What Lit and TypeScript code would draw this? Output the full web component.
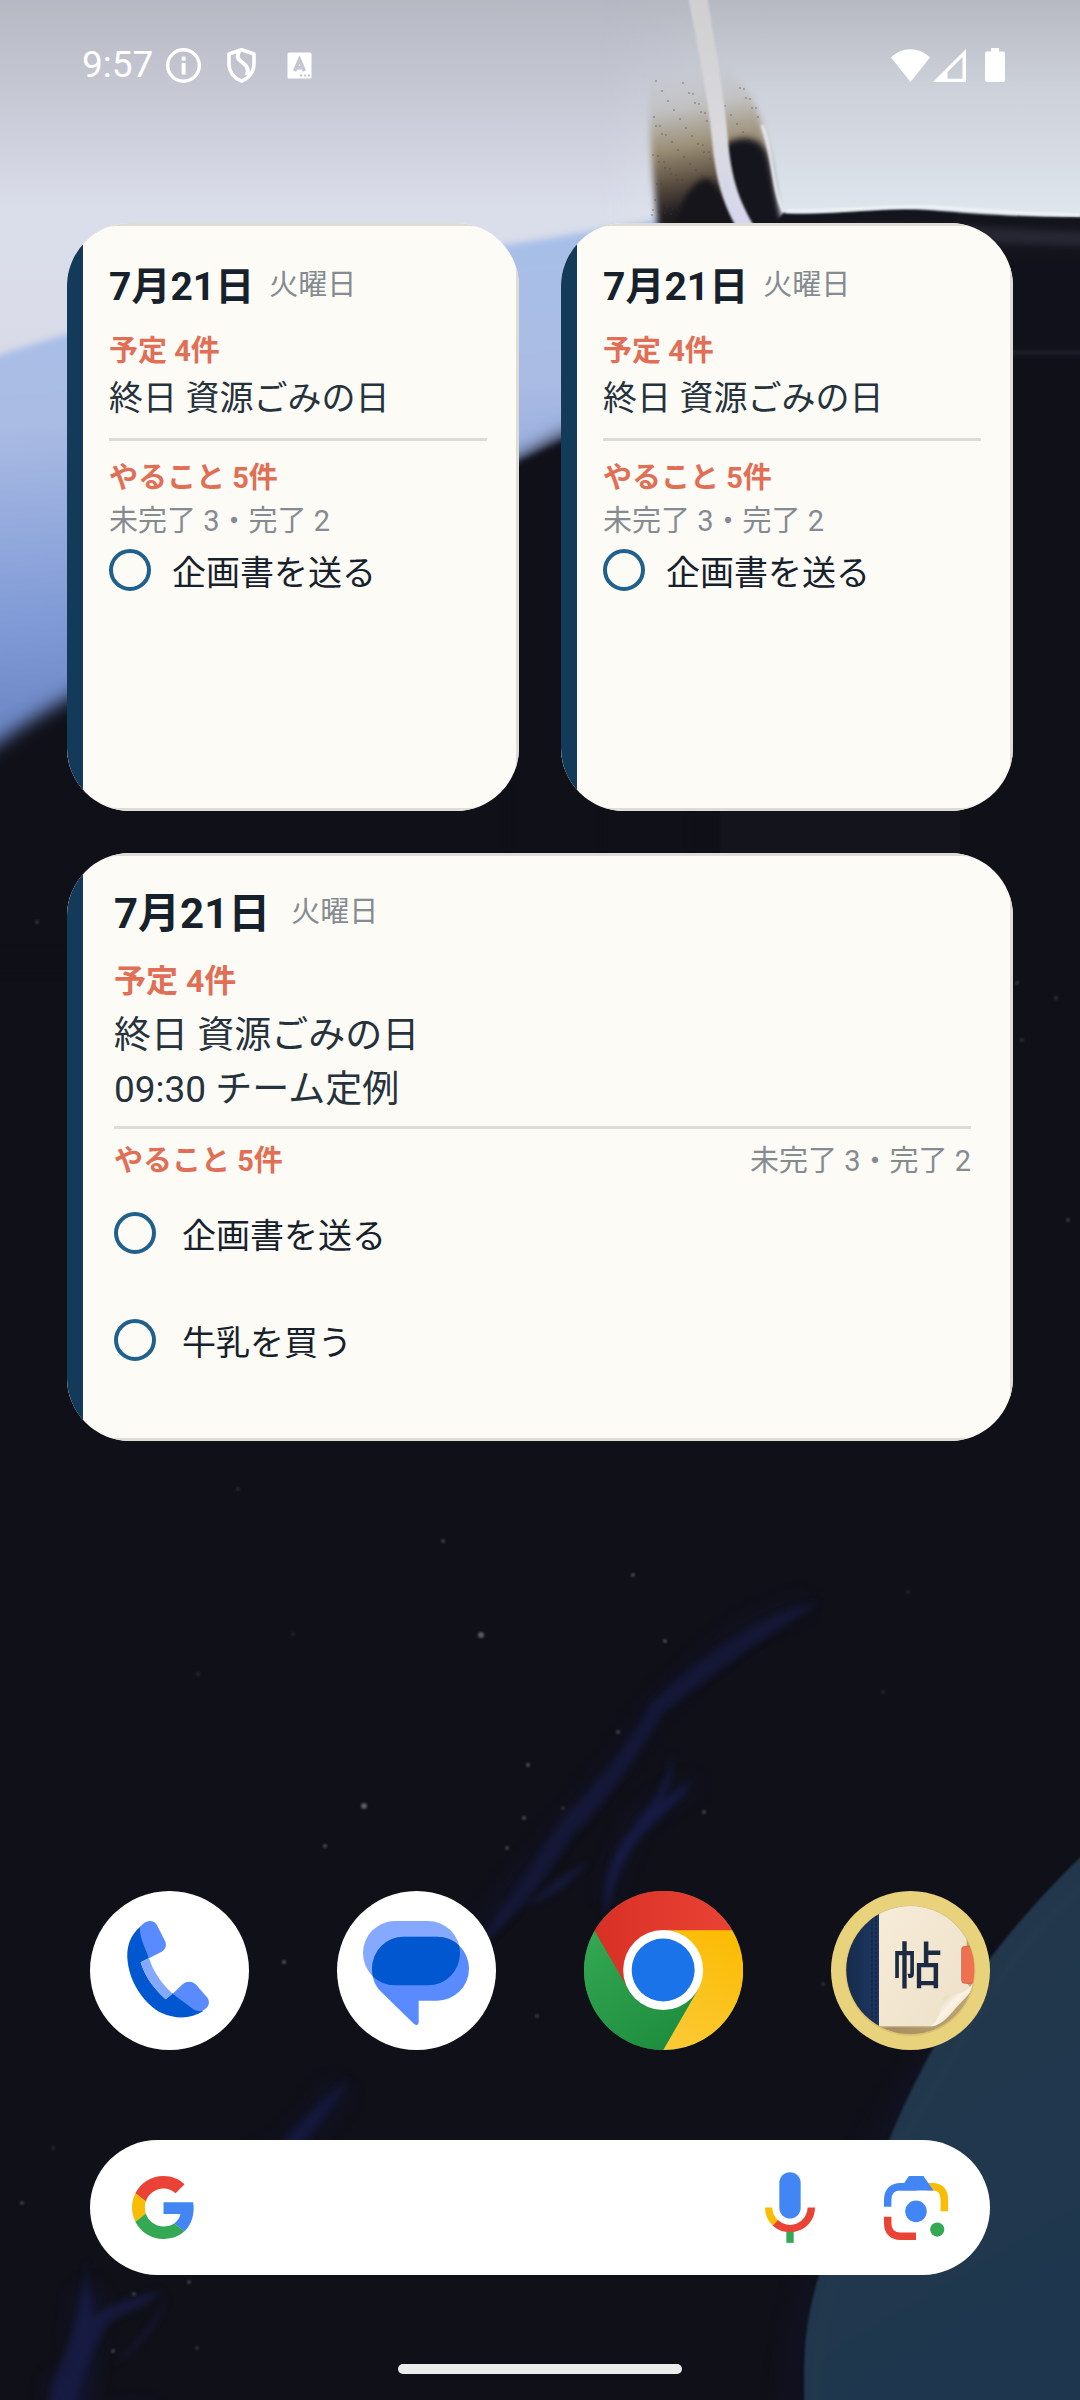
import { LitElement, html, svg, css } from "lit";
import { customElement, property } from "lit/decorators.js";

interface Agenda {
  date: string;
  weekday: string;
  eventsTitle: string;
  events: string[];
  todoTitle: string;
  summary: string;
  todos: string[];
}

const base = {
  date: "7月21日",
  weekday: "火曜日",
  eventsTitle: "予定 4件",
  todoTitle: "やること 5件",
  summary: "未完了 3・完了 2",
};

const compactAgenda: Agenda = {
  ...base,
  events: ["終日 資源ごみの日"],
  todos: ["企画書を送る"],
};

const wideAgenda: Agenda = {
  ...base,
  events: ["終日 資源ごみの日", "09:30 チーム定例"],
  todos: ["企画書を送る", "牛乳を買う"],
};

/* x, y, radius, opacity */
const stars: number[][] = [
  [481, 1635, 3, 0.45], [364, 1806, 3, 0.45], [443, 1541, 2, 0.3], [633, 1575, 2, 0.35],
  [665, 1641, 2, 0.35], [528, 1765, 2, 0.4], [524, 1818, 2, 0.35], [618, 1732, 2, 0.3],
  [704, 1812, 2, 0.3], [325, 1846, 2, 0.35], [284, 1962, 2, 0.4], [537, 2016, 2, 0.25],
  [238, 1489, 2, 0.15], [198, 1674, 2, 0.15], [563, 1808, 2, 0.2], [507, 1848, 2, 0.3],
  [823, 1984, 2, 0.2], [22, 2203, 2, 0.3], [134, 2294, 2, 0.25], [113, 2351, 2, 0.3],
  [189, 2282, 2, 0.3], [197, 2348, 2, 0.2], [908, 1592, 2, 0.12], [883, 1692, 2, 0.12],
  [1022, 1040, 2, 0.2], [1017, 983, 2, 0.2], [1056, 998, 2, 0.2], [1068, 1220, 2, 0.25],
  [37, 922, 2, 0.2], [293, 1634, 2, 0.12], [53, 2148, 2, 0.15], [165, 2154, 2, 0.15],
];

/* Grains scattered over the brown edge, denser towards its lower part. */
const grains: number[][] = Array.from({ length: 150 }, (_, i) => {
  const u = (i * 0.618034) % 1;
  const v = (i * 0.754878) % 1;
  return [652 + Math.round(u * 108), 215 - Math.round(v * v * 135), 1];
});

@customElement("wall-paper")
class WallPaper extends LitElement {
  static styles = css`
    :host { display: block; }
    .art { display: block; width: 100%; height: 100%; }
    filter { color-interpolation-filters: sRGB; }
  `;

  render() {
    return html`
      <svg class="art" viewBox="0 0 1080 2400" preserveAspectRatio="xMidYMid slice" aria-hidden="true">
        <defs>
          <linearGradient id="sky" x1="0" y1="0" x2="0" y2="1">
            <stop offset="0" stop-color="#b6b8c2"></stop>
            <stop offset="0.25" stop-color="#c8cad6"></stop>
            <stop offset="0.5" stop-color="#dadeea"></stop>
            <stop offset="1" stop-color="#d9d9e8"></stop>
          </linearGradient>
          <linearGradient id="haze" x1="0" y1="0" x2="0" y2="1">
            <stop offset="0" stop-color="#b6b9c1"></stop>
            <stop offset="0.4" stop-color="#cdd1da"></stop>
            <stop offset="1" stop-color="#e0e7ed"></stop>
          </linearGradient>
          <linearGradient id="hazeEdge" x1="0" y1="0" x2="1" y2="0">
            <stop offset="0" stop-color="#fff" stop-opacity="0"></stop>
            <stop offset="1" stop-color="#fff"></stop>
          </linearGradient>
          <mask id="hazeMask"><rect x="600" width="480" height="222" fill="#fff"></rect><rect x="600" width="120" height="222" fill="#000"></rect><rect x="600" width="120" height="222" fill="url(#hazeEdge)"></rect></mask>
          <linearGradient id="band" x1="0.1" y1="0" x2="0.2" y2="1">
            <stop offset="0" stop-color="#a5c1ea"></stop>
            <stop offset="0.35" stop-color="#abbce4"></stop>
            <stop offset="0.7" stop-color="#7f9ad6"></stop>
            <stop offset="1" stop-color="#5f7ab9"></stop>
          </linearGradient>
          <linearGradient id="blob" gradientUnits="userSpaceOnUse" x1="692" y1="60" x2="718" y2="225">
            <stop offset="0" stop-color="#c4c5ca" stop-opacity="0"></stop>
            <stop offset="0.28" stop-color="#c0c0c0"></stop>
            <stop offset="0.5" stop-color="#9c9078"></stop>
            <stop offset="0.72" stop-color="#584c3f"></stop>
            <stop offset="0.9" stop-color="#1d1b20"></stop>
          </linearGradient>
          <linearGradient id="strand" x1="0" y1="0" x2="0" y2="1">
            <stop offset="0" stop-color="#cfcfd1"></stop>
            <stop offset="0.55" stop-color="#dadade"></stop>
            <stop offset="1" stop-color="#d5d7ee"></stop>
          </linearGradient>
          <linearGradient id="planet" x1="0" y1="0" x2="0.3" y2="1">
            <stop offset="0" stop-color="#24384b"></stop>
            <stop offset="1" stop-color="#1f374e"></stop>
          </linearGradient>
          <filter id="soft1" x="-20%" y="-20%" width="140%" height="140%"><feGaussianBlur stdDeviation="1"></feGaussianBlur></filter>
          <filter id="soft3" x="-20%" y="-20%" width="140%" height="140%"><feGaussianBlur stdDeviation="3"></feGaussianBlur></filter>
          <filter id="soft9" x="-20%" y="-20%" width="140%" height="140%"><feGaussianBlur stdDeviation="9"></feGaussianBlur></filter>
        </defs>

        <rect width="1080" height="2400" fill="#0f1018"></rect>
        <rect width="1080" height="420" fill="url(#sky)"></rect>
        <rect x="600" width="480" height="222" fill="url(#haze)" mask="url(#hazeMask)"></rect>

        <path d="M-20 362C80 326 200 300 330 275S560 238 680 216V460L-20 790Z" fill="url(#band)" filter="url(#soft3)"></path>
        <path d="M-30 765C60 690 160 655 260 605S470 482 570 432L700 380V960H-30Z" fill="#0f1018" filter="url(#soft9)"></path>
        <path d="M510 466L600 424V1000H510Z" fill="#0f1018" filter="url(#soft3)"></path>

        <path d="M650 60C690 52 738 58 758 112C770 150 770 195 784 232H658C656 190 646 130 650 60Z" fill="url(#blob)" filter="url(#soft3)"></path>
        ${grains.map(([x, y, r]) => svg`<circle cx=${x} cy=${y} r=${r} fill="#4a3f30" opacity="0.4"></circle>`)}
        <path d="M722 146C740 134 760 136 767 154C774 178 772 202 786 236H736C730 200 724 170 722 146Z" fill="#15151e" filter="url(#soft3)"></path>
        <path d="M698 182C710 172 722 182 738 240H672C676 215 684 192 698 182Z" fill="#16151b" filter="url(#soft3)"></path>
        <path d="M762 125C774 155 772 190 784 212" fill="none" stroke="#e9ecf4" stroke-width="3" filter="url(#soft1)"></path>
        <path d="M783 213C840 216 880 206 930 210S1010 217 1100 217V860H720V226H772Z" fill="#14141c" filter="url(#soft1)"></path>
        <path d="M786 211C840 212 880 205 930 207S1010 214 1080 215" fill="none" stroke="#eff3f7" stroke-width="3" filter="url(#soft1)"></path>
        <path d="M790 228C880 218 980 228 1100 232V246C980 244 880 238 790 240Z" fill="#272733" filter="url(#soft3)"></path>
        <rect x="1000" y="262" width="120" height="84" fill="#10111a" filter="url(#soft3)"></rect>
        <rect x="1000" y="350" width="120" height="5" fill="#1b1c27" filter="url(#soft1)"></rect>
        <rect x="960" y="358" width="120" height="520" fill="#0f1018"></rect>
        <path d="M688 -4L707 -4C716 50 724 95 728 140C731 178 740 205 758 232L742 236C722 206 715 175 712 140C708 95 698 50 688 -4Z" fill="url(#strand)" filter="url(#soft1)"></path>

        <g fill="none" stroke="#181b45" stroke-linecap="round" stroke-linejoin="round" filter="url(#soft9)">
          <path d="M800 1605L740 1630L660 1700L615 1765L560 1830L510 1890L450 1960" stroke-width="12" opacity="0.35"></path>
          <path d="M690 1785L635 1820L608 1890" stroke-width="12" opacity="0.4"></path>
          <path d="M335 2095L290 2150L200 2195" stroke-width="24" opacity="0.35"></path>
          <path d="M88 2300L78 2400M140 2420L90 2430L60 2390" stroke-width="26" opacity="0.5"></path>
        </g>
        <g fill="#1a1e50" filter="url(#soft3)">
          <path d="M820 1602C760 1612 700 1660 652 1702C630 1745 600 1780 560 1822C530 1870 490 1930 452 1968C500 1936 540 1890 572 1836C610 1800 640 1750 664 1712C710 1676 760 1640 820 1602Z" opacity="0.5"></path>
          <path d="M692 1782C660 1800 625 1830 612 1862C606 1880 604 1900 605 1918C612 1900 612 1880 626 1858C640 1830 670 1814 692 1782Z" opacity="0.75"></path>
          <path d="M672 1752C668 1786 650 1806 634 1826C656 1812 676 1790 672 1752Z" opacity="0.7"></path>
          <path d="M520 1906C545 1896 560 1870 592 1862C575 1870 568 1896 520 1906Z" opacity="0.6"></path>
          <path d="M350 2078C300 2120 260 2160 225 2225L240 2225C280 2160 320 2130 350 2078Z" opacity="0.55"></path>
          <path d="M312 2130C290 2180 270 2200 250 2225H264C290 2190 300 2170 312 2130Z" opacity="0.5"></path>
          <path d="M86 2260C84 2300 76 2330 62 2360C52 2380 50 2400 50 2410H74C80 2380 90 2350 110 2322C130 2310 150 2306 162 2290C140 2296 110 2300 92 2318Z" opacity="0.6"></path>
          <path d="M168 2296C150 2330 130 2350 112 2364C136 2352 156 2330 168 2296Z" opacity="0.6"></path>
        </g>

        <path d="M1080 1900C1040 1925 960 2010 920 2110C850 2230 810 2240 800 2420H780C780 2240 880 2120 960 1990Z" fill="#14142a" opacity="0.5" filter="url(#soft9)"></path>
        <path d="M1090 1848C1030 1905 985 1960 955 2010C930 2052 905 2100 889 2140C850 2205 806 2265 804 2370V2410H1090Z" fill="url(#planet)" filter="url(#soft1)"></path>
        <path d="M1090 1880C1030 1935 995 1980 968 2030C940 2080 915 2120 898 2150C865 2210 822 2270 818 2370V2410" fill="none" stroke="#273d4e" stroke-width="9" opacity="0.4" filter="url(#soft3)"></path>
        ${stars.map(([x, y, r, o]) => svg`<circle cx=${x} cy=${y} r=${r} fill="#b9bcc4" opacity=${o} filter="url(#soft1)"></circle>`)}
      </svg>
    `;
  }
}

@customElement("agenda-card")
class AgendaCard extends LitElement {
  @property({ attribute: false }) agenda: Agenda = compactAgenda;
  @property({ type: Boolean, reflect: true }) wide = false;

  static styles = css`
    :host { display: block; }
    .card {
      position: relative;
      box-sizing: border-box;
      min-height: 588px;
      height: 100%;
      padding: 40px 32px 24px 42px;
      border-radius: 63px;
      overflow: hidden;
      background: #fcfbf6;
      color: #17212b;
      font-size: 34px;
    }
    .card::before {
      content: "";
      position: absolute;
      inset: 0;
      border: 3px solid #dfdcd5;
      border-radius: 50px;
      pointer-events: none;
    }
    .card::after {
      content: "";
      position: absolute;
      inset: 0 auto 0 0;
      width: 16px;
      background: #143a5a;
    }
    .head { display: flex; align-items: flex-start; gap: 15px; }
    .date { margin: 0; font-size: 39px; line-height: 48px; font-weight: 700; }
    .weekday { font-size: 29px; line-height: 44px; color: #858b90; }
    .title { margin: 0; font-size: 29px; line-height: 40px; font-weight: 700; color: #e16f56; }
    .events-title { margin-top: 20px; }
    .events, .todos { margin: 0; padding: 0; list-style: none; }
    .event { line-height: 54px; color: #26323c; }
    .rule { margin: 13px 0 17px; border: 0; height: 3px; background: #dddcd7; }
    .summary { font-size: 29px; line-height: 46px; color: #858b90; }
    .todos { display: flex; flex-direction: column; gap: 59px; margin-top: 5px; }
    .todo { display: flex; align-items: flex-start; gap: 21px; }
    .check {
      appearance: none;
      box-sizing: border-box;
      flex: none;
      width: 42px;
      height: 42px;
      margin: 0;
      border: 4px solid #20608c;
      border-radius: 50%;
      background: transparent;
    }
    .check:checked { background: #20608c; }
    .label { line-height: 48px; }

    :host([wide]) .card { padding: 36px 42px 24px 47px; }
    :host([wide]) .head { gap: 21px; }
    :host([wide]) .date { font-size: 42px; line-height: 50px; }
    :host([wide]) .weekday { line-height: 46px; }
    :host([wide]) .events-title { margin-top: 22px; font-size: 32px; }
    :host([wide]) .events { margin-top: 8px; }
    :host([wide]) .event { font-size: 37px; }
    :host([wide]) .rule { margin: 9px 0 12px; }
    :host([wide]) .todo-head { display: flex; justify-content: space-between; }
    :host([wide]) .summary { line-height: 40px; }
    :host([wide]) .todos { margin-top: 31px; }
    :host([wide]) .todo { gap: 26px; }
  `;

  render() {
    const a = this.agenda;
    return html`
      <article class="card">
        <header class="head">
          <h2 class="date">${a.date}</h2>
          <span class="weekday">${a.weekday}</span>
        </header>
        <h3 class="title events-title">${a.eventsTitle}</h3>
        <ul class="events">
          ${a.events.map((e) => html`<li class="event">${e}</li>`)}
        </ul>
        <hr class="rule" />
        <div class="todo-head">
          <h3 class="title">${a.todoTitle}</h3>
          <div class="summary">${a.summary}</div>
        </div>
        <ul class="todos">
          ${a.todos.map((t, i) => html`
            <li class="todo">
              <input class="check" type="checkbox" id="todo-${i}" />
              <label class="label" for="todo-${i}">${t}</label>
            </li>`)}
        </ul>
      </article>
    `;
  }
}

const infoIcon = html`
  <svg class="slot" viewBox="0 0 35 35" aria-hidden="true">
    <circle cx="17.5" cy="17.5" r="15.8" fill="none" stroke="#fff" stroke-width="3.4"></circle>
    <rect x="15.6" y="8.6" width="4" height="4" fill="#fff"></rect>
    <rect x="15.6" y="15" width="4" height="11.5" fill="#fff"></rect>
  </svg>`;

const shieldIcon = html`
  <svg class="slot" viewBox="0 0 35 35" aria-hidden="true">
    <path d="M17.5 1.8L30 6V16C30 24.500 24 30.500 17.5 33.200C11 30.500 5 24.500 5 16V6Z" fill="none" stroke="#fff" stroke-width="3.600" stroke-linejoin="round"></path>
    <path d="M15.500 3C12.500 7 13 10.500 17 13.500C22.500 17.500 25.500 20.500 23 27.500" fill="none" stroke="#fff" stroke-width="4"></path>
  </svg>`;

const letterIcon = html`
  <svg class="slot" viewBox="0 0 35 35" aria-hidden="true">
    <rect x="5.5" y="4.5" width="24" height="26" rx="1.5" fill="#fff"></rect>
    <g fill="none" stroke="#c3c5d0" stroke-width="3.400">
      <path d="M12.6 23L17.5 11.500L22.4 23M14 19.800H21"></path>
    </g>
    <path d="M18 26.5h2v2h-2zM22 26.5h2v2h-2zM26 26.5h2v2h-2z" fill="#c3c5d0"></path>
  </svg>`;

const wifiIcon = html`
  <svg class="wifi" viewBox="0 0 39 33" aria-hidden="true">
    <path d="M0 8.6C11 -2.4 28 -2.4 39 8.6L19.5 33Z" fill="#fff"></path>
  </svg>`;

const signalIcon = html`
  <svg class="signal" viewBox="0 0 33 33" aria-hidden="true">
    <path fill-rule="evenodd" d="M33 0V33H0ZM29.5 8L14.5 23V29.8H29.5Z" fill="#fff"></path>
  </svg>`;

const batteryIcon = html`
  <svg class="battery" viewBox="0 0 20 34" aria-hidden="true">
    <path d="M6 0H14V3.4H18Q20 3.4 20 5.4V32Q20 34 18 34H2Q0 34 0 32V5.4Q0 3.4 2 3.4H6Z" fill="#fff"></path>
  </svg>`;

const phoneIcon = html`
  <svg class="app-art" viewBox="60 63 477 477" aria-hidden="true">
    <circle cx="298.5" cy="301.5" r="238.5" fill="#fff"></circle>
    <path d="M212 169C178 197 168 236 173 275C181 343 226 404 275 429C320 449 365 446 400 423L308 370L287 388C252 356 224 318 212 277L237 264Z" fill="#0057cf"></path>
    <path d="M212 277L237 264C250 305 274 340 308 371L287 388C252 357 224 319 212 277Z" fill="#85a9ff"></path>
    <path d="M210 171C219 159 229 153 240 153C250 153 258 158 262 167L285 213C291 226 287 238 275 245L237 265C226 234 206 197 210 171Z" fill="#598bff"></path>
    <path d="M308 371L338 343C349 333 366 333 377 343L411 382C419 392 419 404 411 412C405 419 400 422 393 423C382 426 372 419 362 412Z" fill="#598bff"></path>
  </svg>`;

const messagesIcon = html`
  <svg class="app-art" viewBox="801 63 477 477" aria-hidden="true">
    <defs>
      <clipPath id="pill"><rect x="879" y="153" width="291" height="193" rx="96"></rect></clipPath>
    </defs>
    <circle cx="1039.5" cy="301.5" r="238.5" fill="#fff"></circle>
    <rect x="879" y="153" width="291" height="193" rx="96" fill="#85a9ff"></rect>
    <path d="M1002 200H1101A96 96 0 0 1 1101 392H1046V458Q1044 468 1033 463L931 363C914 345 906 322 906 296A96 96 0 0 1 1002 200Z" fill="#598bff"></path>
    <path clip-path="url(#pill)" d="M1002 200H1101A96 96 0 0 1 1101 392H1046V458L931 363C914 345 906 322 906 296A96 96 0 0 1 1002 200Z" fill="#0057cf"></path>
  </svg>`;

const chromeIcon = html`
  <svg class="app-art" viewBox="72 63 477 477" aria-hidden="true">
    <defs>
      <linearGradient id="cr" x1="0" y1="0" x2="1" y2="0"><stop offset="0" stop-color="#d93025"></stop><stop offset="1" stop-color="#ea4335"></stop></linearGradient>
      <linearGradient id="cy" x1="0.7" y1="0" x2="0.3" y2="1"><stop offset="0" stop-color="#fbbc04"></stop><stop offset="1" stop-color="#fcc934"></stop></linearGradient>
      <linearGradient id="cg" x1="0" y1="0" x2="0.7" y2="1"><stop offset="0" stop-color="#34a853"></stop><stop offset="1" stop-color="#1e8e3e"></stop></linearGradient>
    </defs>
    <circle cx="310.5" cy="301.5" r="238.5" fill="#239341"></circle>
    <path d="M310 540A238.5 238.5 0 0 1 104 182L207 361L413 361Z" fill="url(#cg)"></path>
    <path d="M104 182A238.5 238.5 0 0 1 517 181L310 200L207 361Z" fill="url(#cr)"></path>
    <path d="M517 181A238.5 238.5 0 0 1 310 540L413 361L310 300V181Z" fill="url(#cy)"></path>
    <circle cx="309.5" cy="300" r="120" fill="#fff"></circle>
    <circle cx="309.5" cy="300" r="94.5" fill="#1a73e8"></circle>
  </svg>`;

const notebookIcon = html`
  <svg class="app-art" viewBox="813 63 477 477" aria-hidden="true">
    <defs>
      <clipPath id="lens"><circle cx="1051" cy="300" r="192"></circle></clipPath>
      <linearGradient id="paper" x1="0" y1="0" x2="1" y2="1"><stop offset="0" stop-color="#f7ecd8"></stop><stop offset="1" stop-color="#ece0c8"></stop></linearGradient>
      <linearGradient id="cover" x1="0" y1="0" x2="1" y2="0"><stop offset="0" stop-color="#152a4c"></stop><stop offset="1" stop-color="#1e3861"></stop></linearGradient>
      <linearGradient id="curl" x1="0" y1="0" x2="1" y2="1"><stop offset="0.2" stop-color="#d5c5a6"></stop><stop offset="0.5" stop-color="#fbf4e6"></stop><stop offset="1" stop-color="#cdb993"></stop></linearGradient>
      <linearGradient id="desk" x1="0" y1="0" x2="1" y2="0"><stop offset="0" stop-color="#97805a"></stop><stop offset="1" stop-color="#c0a673"></stop></linearGradient>
    </defs>
    <circle cx="1051.5" cy="301.5" r="238.5" fill="#e8d27b"></circle>
    <circle cx="1051" cy="302" r="195" fill="#c9b05c" opacity="0.5"></circle>
    <g clip-path="url(#lens)">
      <rect x="850" y="100" width="400" height="400" fill="url(#desk)"></rect>
      <path d="M957 100H1220V340C1232 350 1234 358 1228 368L1142 456Q1132 468 1112 469H957Z" fill="url(#paper)"></path>
      <path d="M957 470H1120" stroke="#c9b68f" stroke-width="4"></path>
      <rect x="850" y="100" width="107" height="400" fill="url(#cover)"></rect>
      <path d="M936 100V500M948 100V500" stroke="#0d1c36" stroke-width="3" stroke-dasharray="9 3"></path>
      <rect x="1205" y="229" width="50" height="111" rx="9" fill="#f0714f" stroke="#c9543a" stroke-width="2"></rect>
      <path d="M1112 469C1140 450 1140 420 1150 388C1154 374 1166 374 1182 374C1206 370 1228 360 1238 338C1240 362 1222 378 1202 398C1176 424 1152 466 1112 469Z" fill="url(#curl)"></path>
    </g>
    <text class="mark" x="1072" y="343" text-anchor="middle">帖</text>
  </svg>`;

const googleIcon = html`
  <svg class="g" viewBox="0 0 48 48" aria-hidden="true">
    <path fill="#EA4335" d="M24 9.5c3.54 0 6.71 1.22 9.21 3.6l6.85-6.85C35.9 2.38 30.47 0 24 0 14.62 0 6.51 5.38 2.56 13.22l7.98 6.19C12.43 13.72 17.74 9.5 24 9.5z"></path>
    <path fill="#4285F4" d="M46.98 24.55c0-1.57-.15-3.09-.38-4.55H24v9.02h12.94c-.58 2.96-2.26 5.48-4.78 7.18l7.73 6c4.51-4.18 7.09-10.36 7.09-17.65z"></path>
    <path fill="#FBBC05" d="M10.53 28.59c-.48-1.45-.76-2.99-.76-4.59s.27-3.14.76-4.59l-7.98-6.19C.92 16.46 0 20.12 0 24c0 3.88.92 7.54 2.56 10.78l7.97-6.19z"></path>
    <path fill="#34A853" d="M24 48c6.48 0 11.93-2.13 15.89-5.81l-7.73-6c-2.15 1.45-4.92 2.3-8.16 2.3-6.26 0-11.57-4.22-13.47-9.91l-7.98 6.19C6.51 42.62 14.62 48 24 48z"></path>
  </svg>`;

const micIcon = html`
  <svg class="mic" viewBox="195 158 150 212" aria-hidden="true">
    <rect x="238" y="158" width="64" height="139" rx="32" fill="#4285f4"></rect>
    <path d="M334 264A64 63 0 0 1 225 309" fill="none" stroke="#ea4335" stroke-width="22"></path>
    <path d="M206 264A64 63 0 0 0 226 310" fill="none" stroke="#fbbc05" stroke-width="22"></path>
    <rect x="259" y="337" width="22" height="33" fill="#34a853"></rect>
  </svg>`;

const lensIcon = html`
  <svg class="lens" viewBox="553 167 190 190" aria-hidden="true">
    <g fill="none" stroke-width="22">
      <path d="M680 199H698C720 199 732 213 732 236V272" stroke="#fbbc05"></path>
      <path d="M564 258V238C564 213 578 199 602 199H650" stroke="#4285f4"></path>
      <path d="M564 288V308C564 332 578 346 602 346H648" stroke="#ea4335"></path>
    </g>
    <path d="M612 189L627 167H670L700 210H600V189Z" fill="#4285f4"></path>
    <circle cx="648" cy="272" r="32" fill="#4285f4"></circle>
    <circle cx="711" cy="326" r="21" fill="#34a853"></circle>
  </svg>`;

@customElement("app-root")
class AppRoot extends LitElement {
  static styles = css`
    :host {
      display: block;
      font-family: Roboto, "Noto Sans CJK JP", sans-serif;
    }
    .screen {
      position: relative;
      box-sizing: border-box;
      min-height: 100vh;
      display: flex;
      flex-direction: column;
      padding-bottom: 26px;
      overflow: hidden;
      background: #0f1018;
    }
    .wallpaper { position: absolute; inset: 0; }
    .status, .widgets, .dock, .search, .handle { position: relative; }

    .status {
      display: flex;
      align-items: center;
      justify-content: space-between;
      padding: 42px 75px 0 82px;
      color: #fff;
    }
    .left, .right { display: flex; align-items: center; }
    .left { gap: 23px; }
    .time { margin-right: -10px; font-size: 37px; line-height: 46px; }
    .slot { width: 35px; height: 35px; }
    .wifi { width: 39px; height: 33px; margin-right: 3px; }
    .signal { width: 33px; height: 33px; margin-right: 19px; }
    .battery { width: 20px; height: 34px; }

    .widgets {
      display: grid;
      grid-template-columns: 1fr 1fr;
      gap: 42px;
      padding: 135px 67px 42px;
    }
    .full { grid-column: 1 / -1; }

    .dock {
      display: flex;
      justify-content: space-between;
      margin: auto 90px 90px;
    }
    .app { display: block; width: 159px; height: 159px; border-radius: 50%; }
    .app-art { display: block; width: 100%; height: 100%; }
    .mark { font-size: 150px; font-weight: 500; fill: #1c2a42; font-family: "Noto Sans CJK JP", sans-serif; }

    .search {
      display: flex;
      align-items: center;
      box-sizing: border-box;
      min-height: 135px;
      margin: 0 90px 89px;
      padding: 0 42px;
      border-radius: 68px;
      background: #fff;
    }
    .field {
      flex: 1;
      min-width: 0;
      height: 63px;
      padding: 0 20px;
      border: 0;
      outline: 0;
      background: transparent;
      font: inherit;
      font-size: 37px;
    }
    .icon-btn { display: flex; padding: 0; border: 0; background: none; }
    .voice { margin-right: 69px; }
    .g { width: 63px; height: 63px; }
    .mic { width: 50px; height: 71px; }
    .lens { width: 64px; height: 64px; }

    .handle {
      align-self: center;
      width: 284px;
      height: 10px;
      border-radius: 5px;
      background: #ececec;
    }
  `;

  render() {
    return html`
      <div class="screen">
        <wall-paper class="wallpaper"></wall-paper>
        <header class="status">
          <div class="left">
            <time class="time">9:57</time>
            ${infoIcon}${shieldIcon}${letterIcon}
          </div>
          <div class="right">${wifiIcon}${signalIcon}${batteryIcon}</div>
        </header>
        <main class="widgets">
          <agenda-card .agenda=${compactAgenda}></agenda-card>
          <agenda-card .agenda=${compactAgenda}></agenda-card>
          <agenda-card class="full" wide .agenda=${wideAgenda}></agenda-card>
        </main>
        <nav class="dock" aria-label="アプリ">
          <a class="app" href="#phone" aria-label="電話">${phoneIcon}</a>
          <a class="app" href="#messages" aria-label="メッセージ">${messagesIcon}</a>
          <a class="app" href="#chrome" aria-label="Chrome">${chromeIcon}</a>
          <a class="app" href="#notebook" aria-label="手帖">${notebookIcon}</a>
        </nav>
        <form class="search" role="search">
          <button class="icon-btn" type="button" aria-label="Google">${googleIcon}</button>
          <input class="field" type="text" aria-label="検索" />
          <button class="icon-btn voice" type="button" aria-label="音声検索">${micIcon}</button>
          <button class="icon-btn" type="button" aria-label="Google レンズ">${lensIcon}</button>
        </form>
        <div class="handle"></div>
      </div>
    `;
  }
}
